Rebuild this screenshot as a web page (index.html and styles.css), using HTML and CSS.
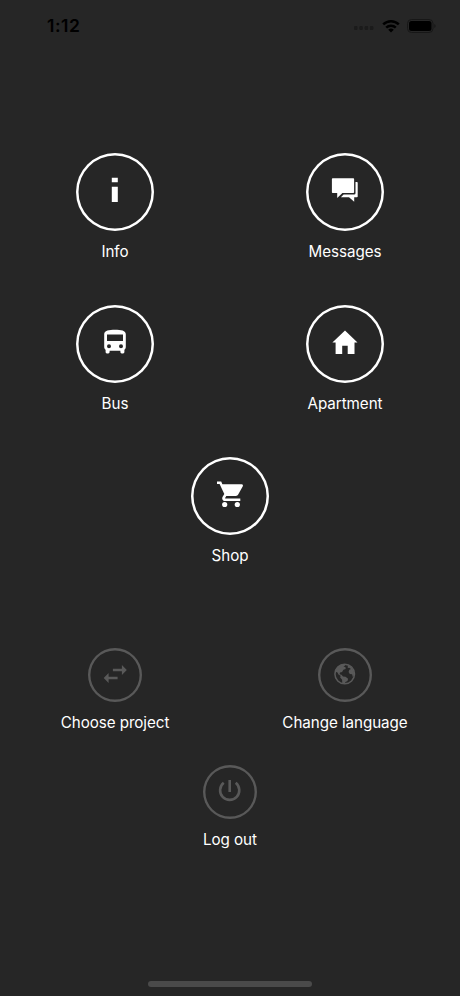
FILE: index.html
```html
<!DOCTYPE html>
<html lang="en">
<head>
    <meta charset="UTF-8">
    <title>Menu</title>
    <link rel="stylesheet" href="styles.css">
</head>
<body>
    <header class="status-bar">
        <span class="time">1:12</span>
        <div class="status-icons">
            <svg width="20" height="8" viewBox="0 0 20 8" fill="#1b1b1b">
                <rect x="0" y="4" width="3.5" height="4" rx="1"/>
                <rect x="5.3" y="4" width="3.5" height="4" rx="1"/>
                <rect x="10.6" y="4" width="3.5" height="4" rx="1"/>
                <rect x="15.9" y="4" width="3.5" height="4" rx="1"/>
            </svg>
            <svg class="wifi" width="18" height="14" viewBox="0 0 18 14" fill="none" stroke="#000" stroke-width="2.5">
                <path d="M1.2 5.3a11.2 11.2 0 0 1 15.6 0"/>
                <path d="M4.2 8.6a7 7 0 0 1 9.6 0"/>
                <path d="M9 13.6 6.2 10.8a4 4 0 0 1 5.6 0z" fill="#000" stroke="none"/>
            </svg>
            <svg class="battery" width="29" height="14" viewBox="0 0 29 14">
                <rect x=".5" y=".5" width="25.5" height="13" rx="4" fill="none" stroke="#171717"/>
                <rect x="2" y="2" width="22.5" height="10" rx="2.5" fill="#000"/>
                <path d="M27.2 5v4q1.5-.6 1.5-2t-1.5-2z" fill="#191919"/>
            </svg>
        </div>
    </header>

    <!-- Main menu -->
    <nav class="menu">
        <a class="item">
            <span class="circle">
                <svg viewBox="0 0 30 30">
                    <path d="M11.8.7h6v4.6h-6zM11.8 9.7h6v15.2h-6z"/>
                </svg>
            </span>
            <span class="label">Info</span>
        </a>
        <a class="item">
            <span class="circle">
                <svg viewBox="0 0 30 30">
                    <path d="M2.7 1.2h20.6q.8 0 .8.8v13.2q0 .8-.8.8H12.4l-5.2 5V16H2.7q-.8 0-.8-.8V2q0-.8.8-.8z"/>
                    <path d="M25.5 5h1.4q.8 0 .8.8v13.6q0 .8-.8.8h-2.7v4.6l-5.2-4.6h-8.1l2.7-2.7h10.6q1.3 0 1.3-1.3z"/>
                </svg>
            </span>
            <span class="label">Messages</span>
        </a>
        <a class="item">
            <span class="circle">
                <svg viewBox="0 0 30 30">
                    <path fill-rule="evenodd" d="M4.2 17.8c0 1.2.5 2.3 1.4 3v2.3c0 .7.6 1.3 1.3 1.3h1.4c.7 0 1.3-.6 1.3-1.3v-1.3h10.8v1.3c0 .7.6 1.3 1.3 1.3h1.4c.7 0 1.3-.6 1.3-1.3v-2.3c.9-.7 1.4-1.8 1.4-3V5.4c0-4.1-4.8-4.7-10.8-4.7S4.2 1.3 4.2 5.4zM9 19.2a2 2 0 1 1 0-4 2 2 0 0 1 0 4zm12 0a2 2 0 1 1 0-4 2 2 0 0 1 0 4zM23 12H7V5.4h16z"/>
                </svg>
            </span>
            <span class="label">Bus</span>
        </a>
        <a class="item">
            <span class="circle">
                <svg viewBox="0 0 30 30">
                    <path d="M12.2 24.9v-8.2h5.5v8.2h6.8V13.5h3L15 1.6 2.4 13.5h3.2v11.4z"/>
                </svg>
            </span>
            <span class="label">Apartment</span>
        </a>
        <a class="item wide">
            <span class="circle">
                <svg viewBox="0 0 30 30">
                    <path d="M2 .5v2.6h2.6l4.7 9.8-1.8 3.2c-.9 1.8.4 4 2.4 4h15.4v-2.6H10.4c-.3 0-.4-.3-.3-.5l1.2-2.1h9.6c1 0 1.9-.5 2.3-1.3l4.6-8.4c.5-.9-.1-1.9-1.1-1.9H7.4L6.2.5z"/>
                    <circle cx="9.7" cy="23.5" r="2.6"/>
                    <circle cx="22.3" cy="23.5" r="2.6"/>
                </svg>
            </span>
            <span class="label">Shop</span>
        </a>
    </nav>

    <!-- Settings -->
    <nav class="menu settings">
        <a class="item">
            <span class="circle small">
                <svg viewBox="0 0 30 30">
                    <path d="M26.8 10 21.9 5.1v3.7h-9v2.5h9v3.6zM3.7 18l4.9 4.9v-3.6h9v-2.5h-9v-3.7z"/>
                </svg>
            </span>
            <span class="label">Choose project</span>
        </a>
        <a class="item">
            <span class="circle small">
                <svg viewBox="0 0 30 30">
                    <circle cx="14.7" cy="14" r="9.8" fill="none" stroke="#595959" stroke-width="1.5"/>
                    <path d="M5.2 11.4C6.3 7.3 9.8 4.4 14 4.3l1.1 1.5-1.7 1 2 .3.3 1.8-2.3.8-1.3 2.3-2.1.5-.4 1.7 1.9.5 1.5 1.8 2.5.2 2.6 2-.6 2.2-2 1.2-1.1 1.9-2.1-.6-.2-3.6-1.9-2.3.4-1.8-2.1-1.1-1-2.1z"/>
                    <path d="m17.8 5 2.8 1.4 2 2.4 1.4 3.5-.1 3.2-1.1 1.6-.7-2.8-2.3-.3-1.2-2.1.7-2.2 1.7-.8-1.9-1.2-1.3.4z"/>
                </svg>
            </span>
            <span class="label">Change language</span>
        </a>
        <a class="item wide">
            <span class="circle small">
                <svg class="power" viewBox="0 0 30 30">
                    <path d="M14.7 3.1v11.9M8.7 5.8a9.6 9.6 0 1 0 12 0"/>
                </svg>
            </span>
            <span class="label">Log out</span>
        </a>
    </nav>

    <div class="home-bar"></div>
</body>
</html>
```
FILE: styles.css
```css
* {
    box-sizing: border-box;
}

body {
    font-family: Inter, "Liberation Sans", sans-serif;
    background: #262626;
    color: #fff;
    margin: 0;
    height: 996px;
    display: flex;
    flex-direction: column;
    overflow: hidden;
}

.status-bar {
    height: 153px;
    padding: 16px 24px 0 47px;
    display: flex;
    justify-content: space-between;
    align-items: flex-start;
    color: #000;
}

.time {
    font-size: 17.5px;
    font-weight: 600;
    line-height: 20px;
    letter-spacing: 0.5px;
}

.status-icons {
    display: flex;
    align-items: center;
    height: 19px;
}

.status-icons svg {
    display: block;
}

.status-icons .wifi {
    margin: 0 7px 0 8px;
}

.menu {
    display: grid;
    grid-template-columns: 1fr 1fr;
    row-gap: 43.2px;
}

.item {
    display: flex;
    flex-direction: column;
    align-items: center;
}

.wide {
    grid-column: span 2;
}

.circle {
    width: 78px;
    height: 78px;
    box-shadow: inset 0 0 0 2.5px #fff;
    border-radius: 50%;
    display: flex;
    align-items: center;
    justify-content: center;
}

.circle svg {
    width: 30px;
    height: 30px;
    fill: #fff;
}

.label {
    margin-top: 10px;
    font-size: 15.2px;
    line-height: 22px;
    height: 21px;
    letter-spacing: -0.06px;
}

.settings {
    margin-top: 81.6px;
    row-gap: 23px;
}

.small {
    width: 54px;
    height: 54px;
    box-shadow: inset 0 0 0 2.4px #595959;
}

.small svg {
    fill: #595959;
}

.small .power {
    fill: none;
    stroke: #595959;
    stroke-width: 2.6;
}

.settings .label {
    height: 30px;
}

.home-bar {
    width: 164px;
    height: 6px;
    margin: auto auto 9px;
    border-radius: 3px;
    background: #4a4a4a;
}
```
